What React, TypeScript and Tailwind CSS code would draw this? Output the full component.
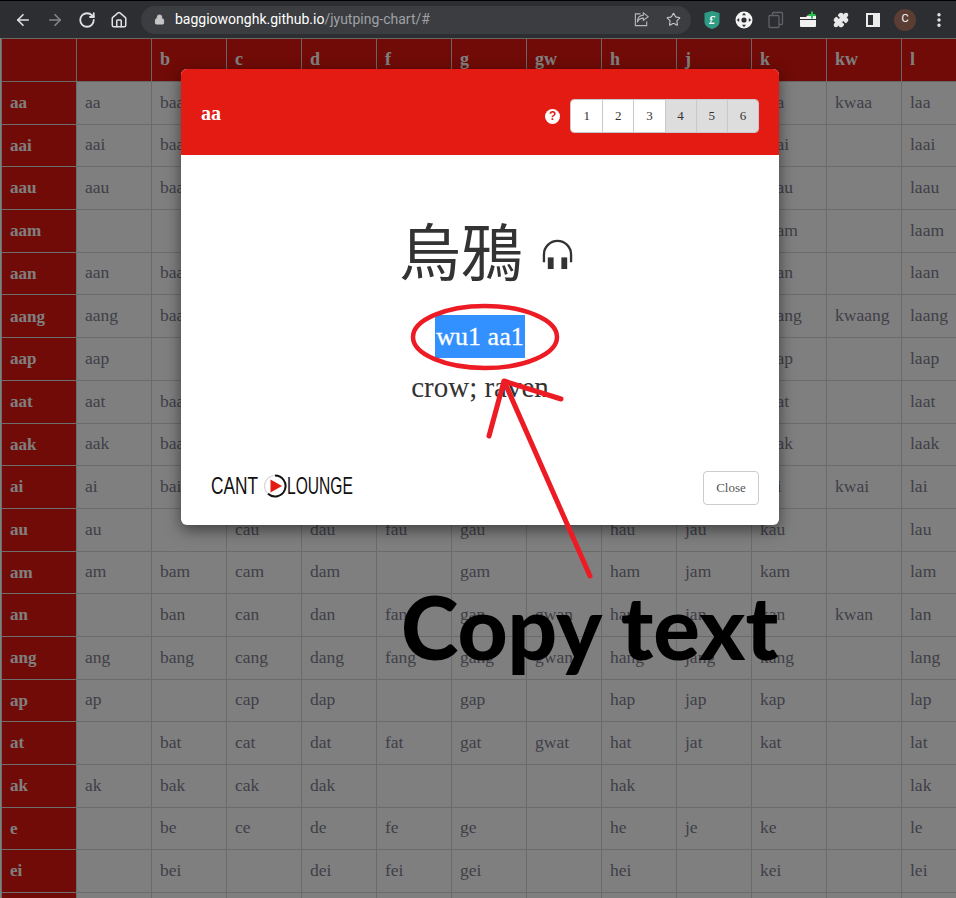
import { ArrowLeft, ArrowRight, RotateCw, Home, Lock, Star, Puzzle, EllipsisVertical } from 'lucide-react'

const INITIALS = ['', 'b', 'c', 'd', 'f', 'g', 'gw', 'h', 'j', 'k', 'kw', 'l']

// "-" marks a syllable that does not exist
const ROWS: [string, string][] = [
  ['aa',   'aa baa caa daa faa gaa gwaa haa jaa kaa kwaa laa'],
  ['aai',  'aai baai caai daai faai gaai gwaai haai jaai kaai - laai'],
  ['aau',  'aau baau caau daau - gaau - haau jaau kaau - laau'],
  ['aam',  '- - caam daam - gaam - haam jaam kaam - laam'],
  ['aan',  'aan baan caan daan faan gaan gwaan haan jaan kaan - laan'],
  ['aang', 'aang baang caang daang faang gaang gwaang haang jaang kaang kwaang laang'],
  ['aap',  'aap - caap daap faap gaap - haap jaap kaap - laap'],
  ['aat',  'aat baat caat daat faat gaat gwaat haat jaat kaat - laat'],
  ['aak',  'aak baak caak - - gaak gwaak haak jaak kaak - laak'],
  ['ai',   'ai bai cai dai fai gai gwai hai jai kai kwai lai'],
  ['au',   'au - cau dau fau gau - hau jau kau - lau'],
  ['am',   'am bam cam dam - gam - ham jam kam - lam'],
  ['an',   '- ban can dan fan gan gwan han jan kan kwan lan'],
  ['ang',  'ang bang cang dang fang gang gwang hang jang kang - lang'],
  ['ap',   'ap - cap dap - gap - hap jap kap - lap'],
  ['at',   '- bat cat dat fat gat gwat hat jat kat - lat'],
  ['ak',   'ak bak cak dak - - - hak - - - lak'],
  ['e',    '- be ce de fe ge - he je ke - le'],
  ['ei',   '- bei - dei fei gei - hei - kei - lei'],
]

function Toolbar() {
  return (
    <div className="h-[38px] bg-[#2d2e31] border-t border-black flex items-center text-[#dfe1e5] relative">
      <div className="w-[141px] flex items-center pl-[14px] gap-[14px] flex-shrink-0">
        <ArrowLeft className="w-[18px] h-[18px]" strokeWidth={2.2} />
        <ArrowRight className="w-[18px] h-[18px] text-[#84868a]" strokeWidth={2.2} />
        <RotateCw className="w-[18px] h-[18px]" strokeWidth={2.4} />
        <Home className="w-[18px] h-[18px]" strokeWidth={2} />
      </div>
      <div className="w-[550px] h-[28px] rounded-full bg-[#3c3d40] flex items-center pl-[13px] pr-[10px] flex-shrink-0">
        <Lock className="w-[11px] h-[11px] text-[#c4c7c5] fill-[#c4c7c5] mr-[10px]" strokeWidth={2} />
        <span className="text-[14px] font-['Roboto',sans-serif] text-white">baggiowonghk.github.io<span className="text-[#9ea1a6]">/jyutping-chart/#</span></span>
        <div className="ml-auto flex items-center gap-[16px]">
          <svg viewBox="0 0 18 18" className="w-[17px] h-[17px]" fill="none" stroke="#b5b7bb" strokeWidth="1.2">
            <path d="M8 3H2.500v12.500h12V11" />
            <path d="M11 2l5 4-5 4V7.600C8 7.600 5.600 9 4.600 12c0-4.500 2.400-7.300 6.400-7.600z" />
          </svg>
          <Star className="w-[15px] h-[15px] text-[#c4c7c5]" strokeWidth={1.8} />
        </div>
      </div>
      <div className="flex-1 flex items-center pl-[12px] gap-[14px]">
        <svg viewBox="0 0 18 20" className="w-[18px] h-[20px]">
          <path d="M1.500 3 9 1l7.500 2v9c0 3.500-3.500 6-7.500 7-4-1-7.500-3.500-7.500-7z" fill="#2f9b85" />
          <text x="9" y="14" textAnchor="middle" fontSize="12" fontStyle="italic" fontWeight="700" fill="#fff" fontFamily="Liberation Serif, serif">£</text>
        </svg>
        <svg viewBox="0 0 18 18" className="w-[18px] h-[18px]">
          <circle cx="9" cy="9" r="8.500" fill="#f4f4f4" />
          <circle cx="9" cy="9" r="2.600" fill="#2d2e31" />
          <path d="M9 1.800l2 2.400H7zM9 16.200l2-2.400H7zM1.800 9l2.400 2V7zM16.200 9l-2.400 2V7z" fill="#2d2e31" />
        </svg>
        <svg viewBox="0 0 18 18" className="w-[18px] h-[18px]" fill="none" stroke="#5f6266" strokeWidth="1.300">
          <rect x="5.500" y="1.500" width="10" height="12" rx="1" />
          <rect x="2" y="4.500" width="10" height="12" rx="1" fill="#2d2e31" />
        </svg>
        <svg viewBox="0 0 18 18" className="w-[18px] h-[18px]">
          <path d="M1 6h6l1.500-1.500H16a1 1 0 0 1 1 1V15a1 1 0 0 1-1 1H2a1 1 0 0 1-1-1z" fill="#f1f1f1" />
          <path d="M1 8.500h16" stroke="#2d2e31" strokeWidth="1" />
          <path d="M13 .5v7M9.500 4h7" stroke="#27c24c" strokeWidth="2" />
        </svg>
        <Puzzle className="w-[16px] h-[16px] ml-[2px] text-[#e8e8e8] fill-[#e8e8e8]" />
        <div className="w-[14px] h-[14px] ml-[3px] border-[2px] border-r-[7px] border-[#ececec]" />
        <div className="w-[22px] h-[22px] rounded-full bg-[#5b3d33] text-white text-[11px] font-['Roboto',sans-serif] flex items-center justify-center">C</div>
        <EllipsisVertical className="w-[18px] h-[18px] text-[#e8e8e8]" strokeWidth={2.6} />
      </div>
    </div>
  )
}

function Chart() {
  return (
    <table className="table-fixed border-collapse w-[975px] ml-[1px] font-['Liberation_Serif',serif] text-[17.500px] text-[#80808f]">
      <thead>
        <tr className="h-[43px]">
          <th className="w-[75px] bg-[#e0160e] border border-[#cfcfcf]" />
          {INITIALS.map((c, i) => (
            <th key={i} className="w-[75px] bg-[#e0160e] border border-[#cfcfcf] px-2 pb-[2px] align-middle text-left font-bold text-white text-[18px]">{c}</th>
          ))}
        </tr>
      </thead>
      <tbody>
        {ROWS.map(([name, cells]) => (
          <tr key={name} className="h-[42.700px]">
            <th className="bg-[#e0160e] border border-[#dcdcdc] px-2 text-left font-bold text-white text-[17px]">{name}</th>
            {cells.split(' ').map((s, i) => (
              <td key={i} className="bg-white border border-[#d6d6d6] px-2 pb-[2px]">{s === '-' ? '' : s}</td>
            ))}
          </tr>
        ))}
        <tr className="h-[42.700px]">
          <th className="bg-[#e0160e] border border-[#dcdcdc]" />
          {INITIALS.map((_, i) => <td key={i} className="bg-white border border-[#d6d6d6]" />)}
        </tr>
      </tbody>
    </table>
  )
}

function ToneButtons() {
  return (
    <div className="flex h-[34px] rounded-[4px] border border-[#c9c9c9] overflow-hidden font-['Liberation_Serif',serif] text-[13px] text-[#333]">
      {[1, 2, 3, 4, 5, 6].map(n => (
        <div key={n} className={`w-[31.170px] flex items-center justify-center border-l border-[#c9c9c9] first:border-l-0 ${n > 3 ? 'bg-[#dddddd]' : 'bg-white'}`}>{n}</div>
      ))}
    </div>
  )
}

function Modal() {
  return (
    <div className="absolute left-[181px] top-[69px] w-[598px] h-[456px] bg-white rounded-[6px] overflow-hidden flex flex-col shadow-[0_5px_15px_rgba(0,0,0,0.5)] font-['Liberation_Serif',serif]">
      <div className="h-[86px] bg-[#e41b13] flex items-center px-5 pt-[8px] flex-shrink-0">
        <span className="text-white font-bold text-[20px] -mt-[6px]">aa</span>
        <div className="ml-auto flex items-center gap-[10px]">
          <div className="w-[15px] h-[15px] rounded-full bg-white text-[#e41b13] text-[12px] font-bold flex items-center justify-center font-['Liberation_Sans',sans-serif]">?</div>
          <ToneButtons />
        </div>
      </div>
      <div className="flex-1 flex flex-col items-center pt-[51px] text-[#333]">
        <div className="flex items-center h-[86px] gap-[19px] pl-[12px]">
          <span className="text-[62px] leading-none font-['Noto_Sans_CJK_TC',sans-serif]">烏鴉</span>
          <svg viewBox="0 0 32 32" className="w-[31px] h-[31px] mt-[10px]" fill="#333">
            <path d="M2 24v-8a14 14 0 0 1 28 0v8" fill="none" stroke="#333" strokeWidth="2.400" />
            <rect x="6" y="19" width="6" height="12" />
            <rect x="20" y="19" width="6" height="12" />
          </svg>
        </div>
        <div className="mt-[23px] h-[43px] leading-[43px] text-[26px] px-[1px] bg-[#3390ff] text-white [-webkit-text-stroke:0.3px_white]">wu1 aa1</div>
        <div className="mt-[12px] text-[29px] leading-[34px] text-[#333]">crow; raven</div>
      </div>
      <div className="h-[82px] flex items-center justify-between pl-[30px] pr-5 pt-[8px] flex-shrink-0">
        <div className="flex items-center text-[#111] font-['Liberation_Sans',sans-serif] text-[24px] leading-none pb-[4px]">
          <span className="inline-block w-[52px] origin-left scale-x-[0.72]">CANT</span>
          <svg viewBox="0 0 24 24" className="w-[24px] h-[24px]">
            <circle cx="12" cy="12" r="10.500" fill="none" stroke="#d8d8d8" strokeWidth="1.200" />
            <path d="M12 1.500a10.500 10.500 0 1 1-7 18.300" fill="none" stroke="#111" strokeWidth="2" />
            <path d="M7.500 5.500 19 12 7.500 18.500z" fill="#e41b13" />
          </svg>
          <span className="inline-block w-[66px] origin-left scale-x-[0.65]">LOUNGE</span>
        </div>
        <button className="w-[56px] h-[34px] border border-[#ccc] rounded-[4px] bg-white text-[13px] text-[#555]">Close</button>
      </div>
    </div>
  )
}

function Annotation() {
  return (
    <>
      <svg className="absolute inset-0 w-[956px] h-[898px] pointer-events-none" viewBox="0 0 956 898" fill="none" stroke="#ed1c24">
        <ellipse cx="485" cy="337" rx="72" ry="31" strokeWidth="4.500" />
        <path d="M590 576 504 381M504 381 561 399M504 381 489 436" strokeWidth="5" strokeLinecap="round" />
      </svg>
      <div className="absolute left-[401px] top-[574px] text-[87px] leading-[106px] font-black text-black whitespace-nowrap font-['Lato',sans-serif]">Copy text</div>
    </>
  )
}

export default function App() {
  return (
    <div className="relative w-[956px] h-[898px] overflow-hidden bg-white">
      <Toolbar />
      <Chart />
      {/* the browser bar stays out of the backdrop */}
      <div className="absolute left-0 right-0 top-[38px] bottom-0 bg-black/50" />
      <Modal />
      <Annotation />
    </div>
  )
}
